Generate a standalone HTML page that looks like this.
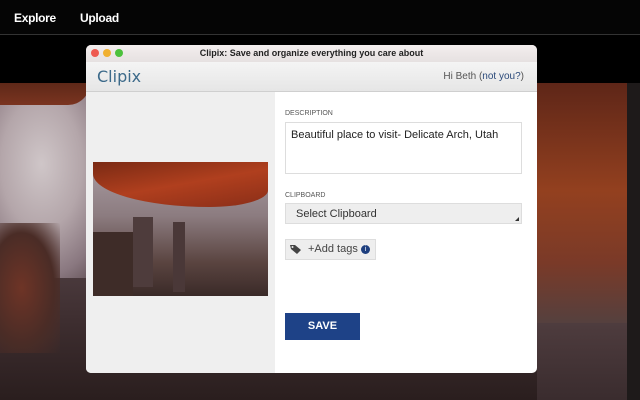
<!DOCTYPE html>
<html><head><style>
*{margin:0;padding:0;box-sizing:border-box}
body{width:640px;height:400px;overflow:hidden;background:#000;font-family:"Liberation Sans",sans-serif;position:relative}
.top{position:absolute;left:0;top:0;width:640px;height:35px;background:#050505;border-bottom:1px solid #333}
.top span{position:absolute;top:11px;color:#fff;font-size:12px;font-weight:bold;letter-spacing:-0.3px}
.bg{position:absolute;left:0;top:83px;width:640px;height:317px;overflow:hidden;background:#3a2a2a}
.win{position:absolute;left:86px;top:45px;width:451px;height:328px;border-radius:5px;overflow:hidden;background:#fff}
.tb{height:17px;background:linear-gradient(#f3eeee,#e6e1e1);text-align:center;font-size:9px;font-weight:bold;color:#222;line-height:17px;position:relative}
.dot{position:absolute;top:4px;width:8px;height:8px;border-radius:50%}
.hd{height:30px;background:linear-gradient(#f4f4f4,#e6e6e6);border-bottom:1px solid #cfcfcf;position:relative}
.logo{position:absolute;left:11px;top:5px;font-family:"DejaVu Sans",sans-serif;font-size:16px;color:#3c6a8a}
.hi{position:absolute;right:13px;top:9px;font-size:10px;color:#555}
.hi b{font-weight:normal;color:#2b4a7a}
.left{position:absolute;left:0;top:47px;width:189px;height:281px;background:#efefef}
.lbl{position:absolute;left:199px;font-size:7px;color:#555}
.box{position:absolute;left:199px;width:237px;border:1px solid #ddd}
</style></head><body>
<div class="top"><span style="left:14px">Explore</span><span style="left:80px">Upload</span></div>
<div class="bg">
<div style="position:absolute;left:0;top:0;width:640px;height:317px;background:linear-gradient(180deg,#5a3a30 0%,#5b4a4e 40%,#3e2e30 75%,#2a1e1e 100%)"></div>
<div style="position:absolute;left:-30px;top:5px;width:130px;height:190px;background:radial-gradient(ellipse at 55% 40%,#cfc6c8 0%,#b4a6aa 40%,#8a7880 70%,rgba(90,70,75,0) 100%)"></div>
<div style="position:absolute;left:0;top:0;width:90px;height:22px;background:linear-gradient(#5e2818,#7a3420);border-radius:0 0 30px 0"></div>
<div style="position:absolute;left:-10px;top:140px;width:70px;height:130px;background:radial-gradient(ellipse at 45% 50%,#6e3426,#4a2c26 60%,rgba(60,40,40,0))"></div>
<div style="position:absolute;left:537px;top:0;width:90px;height:240px;background:linear-gradient(180deg,#5e2618,#93401f 45%,#7a3a28 75%,#55403e 100%)"></div>
<div style="position:absolute;left:537px;top:240px;width:90px;height:77px;background:linear-gradient(#4e3c3e,#3a2c2e)"></div>
<div style="position:absolute;left:627px;top:0;width:13px;height:317px;background:#1e1a1a"></div>
</div>
<div class="win">
<div class="tb"><span class="dot" style="left:5px;background:#ee5a50"></span><span class="dot" style="left:17px;background:#f0b030"></span><span class="dot" style="left:29px;background:#4cc13c"></span>Clipix: Save and organize everything you care about</div>
<div class="hd"><span class="logo">Clipi<span>x</span></span><span class="hi">Hi Beth (<b>not you?</b>)</span></div>
<div class="left">
<div style="position:absolute;left:7px;top:70px;width:175px;height:134px;overflow:hidden;background:linear-gradient(180deg,#a99ca2 0%,#8c7c80 40%,#5a4440 75%,#3a2a28 100%)">
<div style="position:absolute;left:0;top:0;width:175px;height:45px;background:linear-gradient(170deg,#7a2a14 0%,#b03f1e 50%,#8a2e18 100%);border-radius:0 0 40% 80%/0 0 20px 40px"></div>
<div style="position:absolute;left:40px;top:55px;width:20px;height:70px;background:#4e3c3c"></div>
<div style="position:absolute;left:80px;top:60px;width:12px;height:70px;background:#4a3838"></div>
<div style="position:absolute;left:0;top:70px;width:40px;height:64px;background:#3e2c28"></div>
</div></div>
<div class="lbl" style="top:65px">DESCRIPTION</div>
<div class="box" style="top:77px;height:52px;font-size:11px;color:#222;padding:6px 5px">Beautiful place to visit- Delicate Arch, Utah</div>
<div class="lbl" style="top:147px">CLIPBOARD</div>
<div class="box" style="top:158px;height:21px;background:#eee;font-size:11px;color:#333;padding:4px 10px">Select Clipboard<span style="position:absolute;right:2px;bottom:2px;width:0;height:0;border-left:4px solid transparent;border-bottom:4px solid #333"></span></div>
<div class="box" style="top:194px;width:91px;height:21px;background:#eee;font-size:11px;color:#444;padding:3px 0 0 22px">+Add tags <span style="display:inline-block;width:9px;height:9px;border-radius:50%;background:#1e3f7f;color:#fff;font-size:7px;text-align:center;line-height:9px;vertical-align:1px">i</span>
<svg style="position:absolute;left:4px;top:4px" width="12" height="11" viewBox="0 0 12 11"><path d="M0 1 L5 1 L11 6 L7 10 L1 5 Z" fill="#444"/><circle cx="2.5" cy="3" r="1" fill="#eee"/></svg></div>
<div style="position:absolute;left:199px;top:268px;width:75px;height:27px;background:#1e4287;color:#fff;font-size:11px;font-weight:bold;text-align:center;line-height:27px">SAVE</div>
</div>
</body></html>
